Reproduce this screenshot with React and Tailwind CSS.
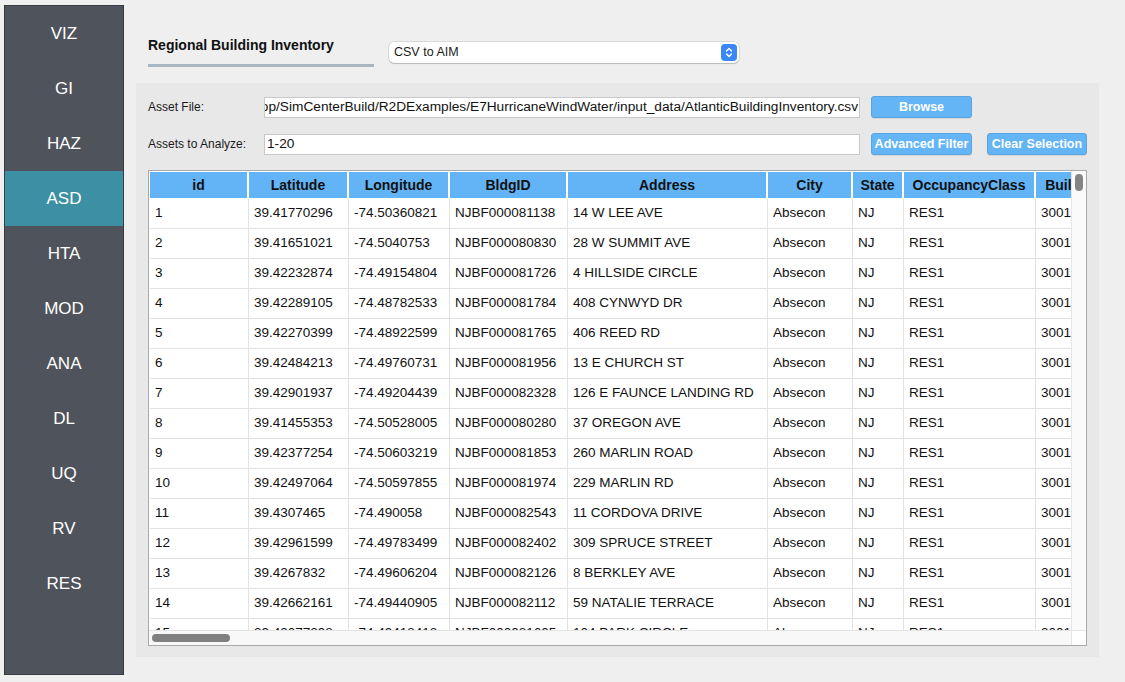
import React from "react";

const NAV = ["VIZ", "GI", "HAZ", "ASD", "HTA", "MOD", "ANA", "DL", "UQ", "RV", "RES"];

const COLS = [
  { name: "id", w: "w-[99px]" },
  { name: "Latitude", w: "w-[100px]" },
  { name: "Longitude", w: "w-[101px]" },
  { name: "BldgID", w: "w-[118px]" },
  { name: "Address", w: "w-[200px]" },
  { name: "City", w: "w-[85px]" },
  { name: "State", w: "w-[51px]" },
  { name: "OccupancyClass", w: "w-[132px]" },
  { name: "BuildingType", w: "w-[108px]" },
  { name: "NumberOfStories", w: "w-[130px]" },
];

const ROWS = [
  ["1", "39.41770296", "-74.50360821", "NJBF000081138", "14 W LEE AVE"],
  ["2", "39.41651021", "-74.5040753", "NJBF000080830", "28 W SUMMIT AVE"],
  ["3", "39.42232874", "-74.49154804", "NJBF000081726", "4 HILLSIDE CIRCLE"],
  ["4", "39.42289105", "-74.48782533", "NJBF000081784", "408 CYNWYD DR"],
  ["5", "39.42270399", "-74.48922599", "NJBF000081765", "406 REED RD"],
  ["6", "39.42484213", "-74.49760731", "NJBF000081956", "13 E CHURCH ST"],
  ["7", "39.42901937", "-74.49204439", "NJBF000082328", "126 E FAUNCE LANDING RD"],
  ["8", "39.41455353", "-74.50528005", "NJBF000080280", "37 OREGON AVE"],
  ["9", "39.42377254", "-74.50603219", "NJBF000081853", "260 MARLIN ROAD"],
  ["10", "39.42497064", "-74.50597855", "NJBF000081974", "229 MARLIN RD"],
  ["11", "39.4307465", "-74.490058", "NJBF000082543", "11 CORDOVA DRIVE"],
  ["12", "39.42961599", "-74.49783499", "NJBF000082402", "309 SPRUCE STREET"],
  ["13", "39.4267832", "-74.49606204", "NJBF000082126", "8 BERKLEY AVE"],
  ["14", "39.42662161", "-74.49440905", "NJBF000082112", "59 NATALIE TERRACE"],
  ["15", "39.42077298", "-74.49418418", "NJBF000081605", "104 PARK CIRCLE"],
];

function Stepper() {
  return (
    <div className="w-[16px] h-[17px] rounded-[4px] bg-[#3b87f5] flex items-center justify-center">
      <svg width="10" height="13" viewBox="0 0 10 13" fill="none">
        <path d="M2.5 5 L5 2.5 L7.5 5" stroke="white" strokeWidth="1.4" strokeLinecap="round" strokeLinejoin="round" />
        <path d="M2.5 8 L5 10.5 L7.5 8" stroke="white" strokeWidth="1.4" strokeLinecap="round" strokeLinejoin="round" />
      </svg>
    </div>
  );
}

function Btn({ children, w }) {
  return (
    <div
      className={`${w} h-[22px] rounded-[3px] bg-[#64b5f6] border border-[#5aa4e0] flex items-center justify-center text-white font-bold text-[12.5px] shadow-[0_1px_0_rgba(0,0,0,0.08)]`}
    >
      {children}
    </div>
  );
}

export default function App() {
  const font = { fontFamily: '"Liberation Sans", Arial, sans-serif' };
  return (
    <div className="w-[1125px] h-[682px] bg-[#efefef] flex pt-[5px] pl-[4px] overflow-hidden" style={font}>
      {/* Sidebar */}
      <div className="w-[120px] h-[670px] border border-[#383b41] bg-[#4f535b] flex flex-col shrink-0">
        {NAV.map((n) => (
          <div
            key={n}
            className={`h-[55px] flex items-center justify-center text-white text-[17px] ${
              n === "ASD" ? "bg-[#3d90a4]" : ""
            }`}
          >
            {n}
          </div>
        ))}
      </div>

      {/* Main */}
      <div className="ml-[12px] flex flex-col">
        {/* header */}
        <div className="h-[78px] flex pl-[12px]">
          <div className="w-[226px] flex flex-col">
            <div className="mt-[32px] h-[17px] leading-[17px] text-[14px] font-bold text-[#111]">
              Regional Building Inventory
            </div>
            <div className="mt-[10px] h-[3px] bg-[#a9b7c2]" />
          </div>
          <div className="ml-[15px] mt-[37px] w-[350px] h-[21px] bg-white rounded-[5px] shadow-[0_0_0_0.5px_rgba(0,0,0,0.18),0_1px_1px_rgba(0,0,0,0.15)] flex items-center justify-between pl-[5px] pr-[2px]">
            <span className="text-[12.5px] text-[#1a1a1a]">CSV to AIM</span>
            <Stepper />
          </div>
        </div>

        {/* panel */}
        <div className="w-[963px] h-[574px] bg-[#e8e8e8] pt-[13px] pl-[12px] flex flex-col">
          <div className="h-[22px] flex items-center">
            <div className="w-[116px] text-[12px] text-[#1a1a1a]">Asset File:</div>
            <div className="w-[596px] h-[21px] bg-white border border-[#c9c9c9] overflow-hidden">
              <div className="h-full flex justify-end items-center whitespace-nowrap pr-[1px] text-[13.7px] text-[#111]">
                /Users/fmk/Desktop/SimCenterBuild/R2DExamples/E7HurricaneWindWater/input_data/AtlanticBuildingInventory.csv
              </div>
            </div>
            <div className="ml-[11px]">
              <Btn w="w-[101px]">Browse</Btn>
            </div>
          </div>
          <div className="mt-[15px] h-[22px] flex items-center">
            <div className="w-[116px] text-[12px] text-[#1a1a1a] whitespace-nowrap">Assets to Analyze:</div>
            <div className="w-[596px] h-[21px] bg-white border border-[#c9c9c9] flex items-center pl-[2px] text-[13.7px] text-[#111]">
              1-20
            </div>
            <div className="ml-[11px]">
              <Btn w="w-[101px]">Advanced Filter</Btn>
            </div>
            <div className="ml-[15px]">
              <Btn w="w-[100px]">Clear Selection</Btn>
            </div>
          </div>

          {/* table frame */}
          <div className="mt-[15px] w-[939px] h-[476px] border border-[#a9a9a9] bg-white flex flex-col">
            <div className="flex h-[459px]">
              <div className="w-[922px] h-[459px] overflow-hidden pl-[1px] pt-[1px]">
                <div className="flex h-[27px]">
                  {COLS.map((c) => (
                    <div
                      key={c.name}
                      className={`${c.w} shrink-0 h-[27px] border-r-2 border-b border-white bg-[#63b4f6] flex items-center justify-center text-[14px] font-bold text-[#111] whitespace-nowrap overflow-hidden`}
                    >
                      {c.name}
                    </div>
                  ))}
                </div>
                {ROWS.map((r) => {
                  const cells = [...r, "Absecon", "NJ", "RES1", "3001", "1"];
                  return (
                    <div key={r[0]} className="flex h-[30px]">
                      {COLS.map((c, i) => (
                        <div
                          key={c.name}
                          className={`${c.w} shrink-0 h-[30px] border-r border-b border-[#e2e2e2] flex items-center pl-[5px] text-[13.5px] text-[#111] whitespace-nowrap overflow-hidden`}
                        >
                          {cells[i]}
                        </div>
                      ))}
                    </div>
                  );
                })}
              </div>
              {/* vertical scrollbar */}
              <div className="w-[15px] h-[459px] bg-[#fafafa] border-l border-[#e6e6e6] pt-[3px] flex justify-center">
                <div className="w-[8px] h-[17px] rounded-full bg-[#858585]" />
              </div>
            </div>
            <div className="flex h-[15px]">
              <div className="w-[922px] h-[15px] bg-[#f8f8f8] border-t border-[#e4e4e4] pl-[3px] pt-[3px]">
                <div className="w-[78px] h-[8px] rounded-full bg-[#808080]" />
              </div>
              <div className="w-[15px] h-[15px] bg-white border-l border-t border-[#e6e6e6]" />
            </div>
          </div>
        </div>
      </div>
    </div>
  );
}
